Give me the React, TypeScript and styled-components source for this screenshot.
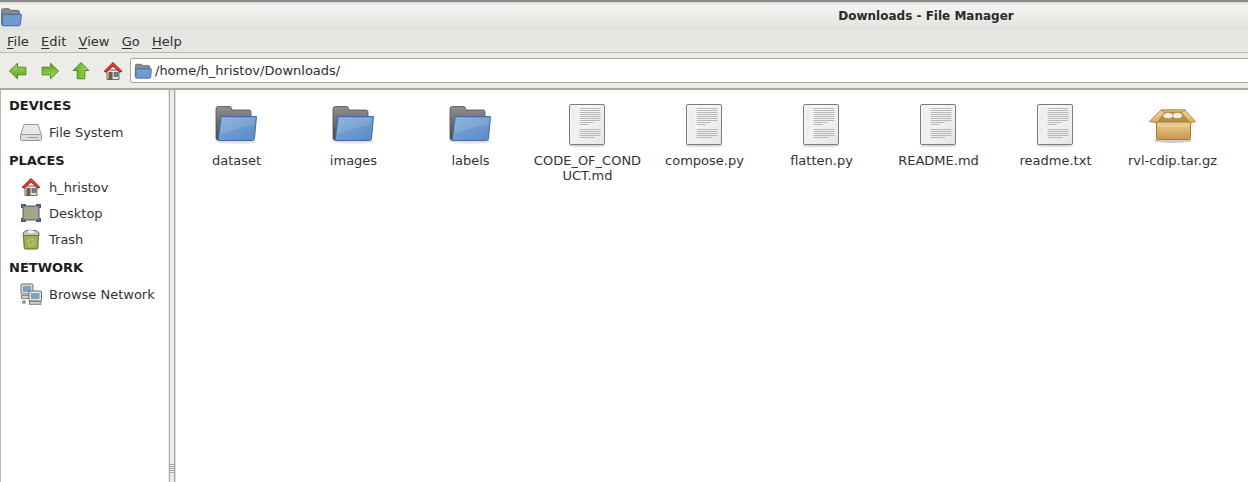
import React from "react";
import styled, { createGlobalStyle } from "styled-components";

const Global = createGlobalStyle`
  html, body { margin: 0; padding: 0; background: #fff; }
  body { font-family: "DejaVu Sans", sans-serif; color: #1c1c1c; overflow: hidden; }
`;

const Win = styled.div`
  width: 1248px; height: 482px; display: flex; flex-direction: column; overflow: hidden;
`;
const TitleBar = styled.div`
  height: 30px; flex: none; display: flex; align-items: center; position: relative;
  border-top: 2px solid #8b8b87; box-sizing: border-box;
  background: linear-gradient(#d8d8d5 0, #f4f4f2 4px, #ececea 14px, #e0e0dd 28px);
`;
const TitleIcon = styled.div`
  width: 22px; height: 22px; display: flex; margin-top: 2px;
`;
const TitleText = styled.div`
  position: absolute; left: 604px; width: 644px; top: 7px; text-align: center;
  font-size: 12px; font-weight: 700; color: #2a2a2a; line-height: 15px;
`;
const MenuBar = styled.div`
  height: 23px; flex: none; display: flex; align-items: center; gap: 12.3px; padding-left: 7px;
  background: #e6e6e3; border-bottom: 1px solid #b9b9b4; box-sizing: border-box;
  font-size: 13px; color: #2e2e2e;
  u { text-underline-offset: 2px; text-decoration-thickness: 1px; }
`;
const ToolBar = styled.div`
  height: 37px; flex: none; display: flex; align-items: center; box-sizing: border-box;
  padding: 0 0 0 8px; background: #ecece9; overflow: hidden;
  border-bottom: 2px solid #a9a9a4;
`;
const NavIcons = styled.div`
  display: flex; align-items: center; gap: 11.7px; width: 122px; flex: none; padding-top: 1px;
`;
const Address = styled.div`
  flex: 1; height: 25px; margin-right: -4px; display: flex; align-items: center; gap: 3px; padding-left: 3px;
  background: #fff; border: 1px solid #a9a9a4; border-radius: 2px; box-sizing: border-box;
  font-size: 13px; color: #2e2e2e;
`;
const Body = styled.div`
  flex: 1; display: flex; min-height: 0; background: #e9e9e6;
`;
const Side = styled.div`
  width: 168px; flex: none; background: #fff; box-sizing: border-box;
  border-left: 1px solid #b9b9b4;
`;
const SideHead = styled.div`
  font-size: 13px; font-weight: 700; color: #1c1c1c; height: 29px; line-height: 27px;
  padding: 2px 0 0 8px; box-sizing: border-box;
`;
const SideItem = styled.div`
  height: 26px; display: flex; align-items: center; padding-left: 18px; gap: 6px;
  font-size: 13px; color: #333;
`;
const SideIcon = styled.span`
  width: 24px; height: 24px; flex: none; display: flex; align-items: center; justify-content: center;
`;
const Sash = styled.div`
  width: 6px; flex: none; position: relative; background: #ecece9;
  border-left: 1px solid #a9a9a4; border-right: 1px solid #a9a9a4; box-sizing: border-box;
  margin-left: 1px;
`;
const Grip = styled.div`
  position: absolute; left: 0; right: 0; bottom: 9px; height: 9px;
  background: repeating-linear-gradient(#a9a9a4 0 1px, #ecece9 1px 2px);
`;
const Files = styled.div`
  flex: 1; background: #fff; display: flex; align-items: flex-start; padding: 9px 0 0 2px;
  border-left: 1px solid #dcdcd8; box-sizing: border-box;
`;
const FileCell = styled.div`
  width: 117px; flex: none; display: flex; flex-direction: column; align-items: center;
`;
const FileIconBox = styled.div`
  height: 48px; padding-right: 2px; display: flex; align-items: flex-start; justify-content: center;
`;
const FileName = styled.div`
  margin-top: 6px; width: 112px; text-align: center; font-size: 13px; line-height: 15px; color: #333;
  overflow-wrap: anywhere;
`;

const FolderSvg = () => (
  <svg width={48} height={48} viewBox="0 0 48 48" style={{ display: "block" }}>
    <defs>
      <linearGradient id="fb" x1="0" y1="0" x2="0" y2="1"><stop offset="0" stopColor="#8f8f8f" /><stop offset="1" stopColor="#4a4a4a" /></linearGradient>
      <linearGradient id="ff" x1="0" y1="0" x2="1" y2="1"><stop offset="0" stopColor="#80aad9" /><stop offset="1" stopColor="#5a8ac3" /></linearGradient>
    </defs>
    <ellipse cx="24" cy="42.5" rx="21" ry="2" fill="#000" opacity=".12" />
    <path d="M4 10.5 C4 8 5 7.5 6.5 7.5 H17 C19 7.5 19.5 8.5 20 11 H37 C38.5 11 39 12 39 13 V41 H5.5 C4.5 41 4 40 4 39Z" fill="url(#fb)" stroke="#4e4e4e" strokeWidth=".8" />
    <path d="M9 17.5 H44.5 L42.5 39.5 C42.4 41 41.5 41.5 40.5 41.5 H6.5 C6 41.5 6.2 40.5 6.3 39.5Z" fill="url(#ff)" stroke="#3465a4" strokeWidth=".9" />
    <path d="M10 19 H43 L42.2 26 C30 27 18 32 7.8 35Z" fill="#fff" opacity=".12" />
  </svg>
);

const DocSvg = () => (
  <svg width={48} height={48} viewBox="0 -3 48 48" style={{ display: "block" }}>
    <defs><linearGradient id="dg" x1="0" y1="0" x2="1" y2="1"><stop offset="0" stopColor="#fdfdfd" /><stop offset="1" stopColor="#e6e6e6" /></linearGradient></defs>
    <ellipse cx="24" cy="43.5" rx="19" ry="1.8" fill="#000" opacity=".15" />
    <rect x="6.5" y="2.5" width="35" height="40" rx="1.5" fill="url(#dg)" stroke="#7c7c7c" />
    <rect x="7.5" y="3.5" width="8" height="38" fill="#f0f0f0" />
    <circle cx="10.5" cy="16" r=".8" fill="#ccc" /><circle cx="10.5" cy="28" r=".8" fill="#ccc" />
    <path d="M16.5 6.5h21M16.5 8.5h21M16.5 10.5h21M16.5 12.5h21M16.5 14.5h21M16.5 16.5h21M16.5 18.5h21M16.5 20.5h14M16.5 22.5h9M16.5 27.5h21M16.5 29.5h21M16.5 31.5h21M16.5 33.5h21M16.5 35.5h15" stroke="#b8b8b8" strokeWidth="1" />
  </svg>
);

const BoxSvg = () => (
  <svg width="48" height="48" viewBox="0 0 48 48" style={{ display: "block" }}>
    <defs>
      <linearGradient id="bx" x1="0" y1="0" x2="0" y2="1"><stop offset="0" stopColor="#eccf95" /><stop offset="1" stopColor="#c8964a" /></linearGradient>
      <linearGradient id="fl" x1="0" y1="0" x2="0" y2="1"><stop offset="0" stopColor="#f0d49a" /><stop offset="1" stopColor="#d9a95c" /></linearGradient>
    </defs>
    <ellipse cx="25" cy="41.5" rx="19" ry="2.5" fill="#000" opacity=".2" />
    <path d="M13 11 H37 L42 24 H8Z" fill="#b98e45" stroke="#8f6428" strokeWidth=".8" />
    <ellipse cx="20" cy="16.5" rx="4.5" ry="2.6" fill="#f4f1e8" stroke="#d8d2bf" strokeWidth=".5" />
    <ellipse cx="29.5" cy="16.5" rx="4.5" ry="2.6" fill="#f4f1e8" stroke="#d8d2bf" strokeWidth=".5" />
    <rect x="8.5" y="23" width="34" height="17.5" rx="1" fill="url(#bx)" stroke="#a97c30" />
    <path d="M9.5 27 H41.5" stroke="#f5deae" strokeWidth="1" opacity=".7" />
    <path d="M13 11 L1.5 22.5 L9 24 L17 13Z" fill="url(#fl)" stroke="#a97c30" strokeWidth=".8" strokeLinejoin="round" />
    <path d="M37 11 L47.5 22.5 L42 24 L33 13Z" fill="url(#fl)" stroke="#a97c30" strokeWidth=".8" strokeLinejoin="round" />
    <path d="M13 11 H37 L35 13 H16Z" fill="#e6c07c" stroke="#a97c30" strokeWidth=".6" />
  </svg>
);

const Arrow = ({ r = 0 }: { r?: number }) => (
  <svg width="20" height="20" viewBox="0 0 20 20" style={{ transform: `rotate(${r}deg)`, display: "block" }}>
    <defs><linearGradient id="ar" x1="0" y1="0" x2="0" y2="1"><stop offset="0" stopColor="#a6dc62" /><stop offset="1" stopColor="#5da022" /></linearGradient></defs>
    <path d="M1.5 10 L9.5 2.2 V6.2 H17.8 V13.8 H9.5 V17.8Z" fill="url(#ar)" stroke="#4b8a16" strokeWidth="1" strokeLinejoin="round" />
  </svg>
);

const HomeSvg = () => (
  <svg width={20} height={20} viewBox="0 0 20 20" style={{ display: "block", flex: "none" }}>
    <path d="M4 9 H16 V18.5 H4Z" fill="#e6e2dc" stroke="#6f6a60" />
    <path d="M1.2 10.3 L10 1.5 L18.8 10.3 L16.8 11.2 L10 5 L3.2 11.2Z" fill="#e8413a" stroke="#a40000" strokeWidth=".9" strokeLinejoin="round" />
    <rect x="5.5" y="11" width="4" height="7.5" fill="#6a5a48" />
    <rect x="11" y="11.5" width="4" height="4" fill="#5f84ad" stroke="#4a4a4a" strokeWidth=".5" />
  </svg>
);

const SmallFolder = ({ s = 18 }: { s?: number }) => (
  <svg width={s} height={s} viewBox="0 0 20 20" style={{ display: "block", flex: "none" }}>
    <path d="M1.5 4 C1.5 3 2 2.5 3 2.5 H8 C9 2.5 9 4 10 4 H16 C17 4 17.5 4.5 17.5 5.5 V17.5 H2.5 C2 17.5 1.5 17 1.5 16.5Z" fill="#8a8a8a" stroke="#5c5c5c" strokeWidth=".8" />
    <path d="M2 7.5 H19 C19.3 7.5 19.5 7.8 19.4 8.2 L18.6 16.5 C18.5 17.5 18 18 17 18 H3.2 C2.6 18 2.2 17.6 2.2 17Z" fill="#6f9bd1" stroke="#3465a4" strokeWidth=".8" />
  </svg>
);

const DriveSvg = () => (
  <svg width="24" height="20" viewBox="0 0 24 20" style={{ display: "block" }}>
    <path d="M5 2.5 H19 L22.5 13 H1.5Z" fill="#e8e8e6" stroke="#9a9a96" />
    <rect x="1.5" y="12.5" width="21" height="6" rx="1.2" fill="#dcdcd9" stroke="#9a9a96" />
    <path d="M9 15.5h10" stroke="#a5a5a0" />
  </svg>
);

const DesktopSvg = () => (
  <svg width="20" height="20" viewBox="0 0 20 20" style={{ display: "block" }}>
    <rect x="2" y="3" width="16" height="14" rx="2.5" fill="#a4a68a" stroke="#54564a" />
    <path d="M1 5 V2 H5M15 2 H19 V5M19 15 V18 H15M5 18 H1 V15" stroke="#3f5f8a" strokeWidth="2" fill="none" />
  </svg>
);

const TrashSvg = () => (
  <svg width="20" height="22" viewBox="0 0 20 22" style={{ display: "block" }}>
    <path d="M2.5 7 H17.5 L16.8 20 C16.7 20.7 16.3 21 15.5 21 H4.5 C3.7 21 3.3 20.7 3.2 20Z" fill="#9fb155" stroke="#5f6b2c" />
    <path d="M2 5 L5 2.5 H15 L18 5 V7.5 H2Z" fill="#c9c9c2" stroke="#6b6b62" />
    <path d="M6 3 L9 1.5 L13 3 L16 4 L11 6 L5 5Z" fill="#efefea" stroke="#a5a59c" strokeWidth=".5" />
    <circle cx="10" cy="14" r="3" fill="none" stroke="#c7d48a" strokeWidth="1.2" strokeDasharray="3 1.5" />
  </svg>
);

const NetSvg = () => (
  <svg width="22" height="22" viewBox="0 0 22 22" style={{ display: "block" }}>
    <rect x="1" y="1" width="12" height="10" rx="1" fill="#d8d8d4" stroke="#6f6f6a" />
    <rect x="3" y="3" width="8" height="6" fill="#7da0c6" />
    <rect x="1.5" y="12.5" width="8" height="3" fill="#cfcfca" stroke="#6f6f6a" strokeWidth=".8" />
    <rect x="9" y="8" width="12.5" height="10" rx="1" fill="#e4e4e0" stroke="#6f6f6a" />
    <rect x="11" y="10" width="8.5" height="6" fill="#7da0c6" />
    <rect x="9.5" y="18.5" width="11.5" height="2.8" fill="#cfcfca" stroke="#6f6f6a" strokeWidth=".8" />
    <circle cx="4" cy="19" r="2" fill="#9a9a95" />
  </svg>
);

const files: { name: string; kind: "folder" | "doc" | "box" }[] = [
  { name: "dataset", kind: "folder" },
  { name: "images", kind: "folder" },
  { name: "labels", kind: "folder" },
  { name: "CODE_OF_CONDUCT.md", kind: "doc" },
  { name: "compose.py", kind: "doc" },
  { name: "flatten.py", kind: "doc" },
  { name: "README.md", kind: "doc" },
  { name: "readme.txt", kind: "doc" },
  { name: "rvl-cdip.tar.gz", kind: "box" },
];

export default function App() {
  return (
    <Win>
      <Global />
      <TitleBar>
        <TitleIcon><SmallFolder s={22} /></TitleIcon>
        <TitleText>Downloads - File Manager</TitleText>
      </TitleBar>
      <MenuBar>
        <span><u>F</u>ile</span>
        <span><u>E</u>dit</span>
        <span><u>V</u>iew</span>
        <span><u>G</u>o</span>
        <span><u>H</u>elp</span>
      </MenuBar>
      <ToolBar>
        <NavIcons>
          <Arrow />
          <Arrow r={180} />
          <Arrow r={90} />
          <HomeSvg />
        </NavIcons>
        <Address><SmallFolder />/home/h_hristov/Downloads/</Address>
      </ToolBar>
      <Body>
        <Side>
          <SideHead>DEVICES</SideHead>
          <SideItem><SideIcon><DriveSvg /></SideIcon>File System</SideItem>
          <SideHead>PLACES</SideHead>
          <SideItem><SideIcon><HomeSvg /></SideIcon>h_hristov</SideItem>
          <SideItem><SideIcon><DesktopSvg /></SideIcon>Desktop</SideItem>
          <SideItem><SideIcon><TrashSvg /></SideIcon>Trash</SideItem>
          <SideHead>NETWORK</SideHead>
          <SideItem><SideIcon><NetSvg /></SideIcon>Browse Network</SideItem>
        </Side>
        <Sash><Grip /></Sash>
        <Files>
          {files.map((f) => (
            <FileCell key={f.name}>
              <FileIconBox>
                {f.kind === "folder" ? <FolderSvg /> : f.kind === "doc" ? <DocSvg /> : <BoxSvg />}
              </FileIconBox>
              <FileName>{f.name}</FileName>
            </FileCell>
          ))}
        </Files>
      </Body>
    </Win>
  );
}
